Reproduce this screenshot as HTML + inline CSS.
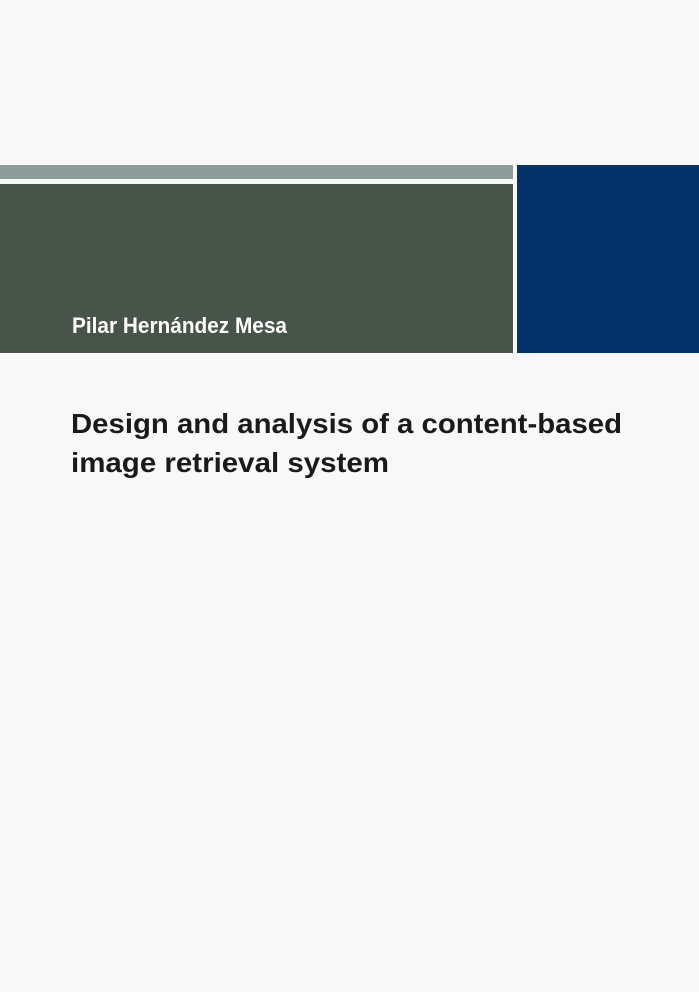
<!DOCTYPE html>
<html><head><style>
html,body{margin:0;padding:0;}
body{width:699px;height:992px;background:#f8f8f8;position:relative;overflow:hidden;font-family:"Liberation Sans",sans-serif;}
div.b{position:absolute;}
</style></head><body>
<div class="b" style="left:0;top:165px;width:513px;height:14px;background:#8c9c98"></div>
<div class="b" style="left:0;top:184px;width:513px;height:169px;background:#485349"></div>
<div class="b" style="left:517px;top:165px;width:182px;height:188px;background:#04336a"></div>
<svg width="699" height="992" style="position:absolute;left:0;top:0">
<text x="72" y="333" font-family="Liberation Sans" font-weight="bold" font-size="22" fill="#fff" textLength="215" lengthAdjust="spacingAndGlyphs">Pilar Hernández Mesa</text>
<text x="71" y="433" font-family="Liberation Sans" font-weight="bold" font-size="28" fill="#1a1a1a" textLength="551" lengthAdjust="spacingAndGlyphs">Design and analysis of a content-based</text>
<text x="71" y="472" font-family="Liberation Sans" font-weight="bold" font-size="28" fill="#1a1a1a" textLength="318" lengthAdjust="spacingAndGlyphs">image retrieval system</text>
</svg>
</body></html>
